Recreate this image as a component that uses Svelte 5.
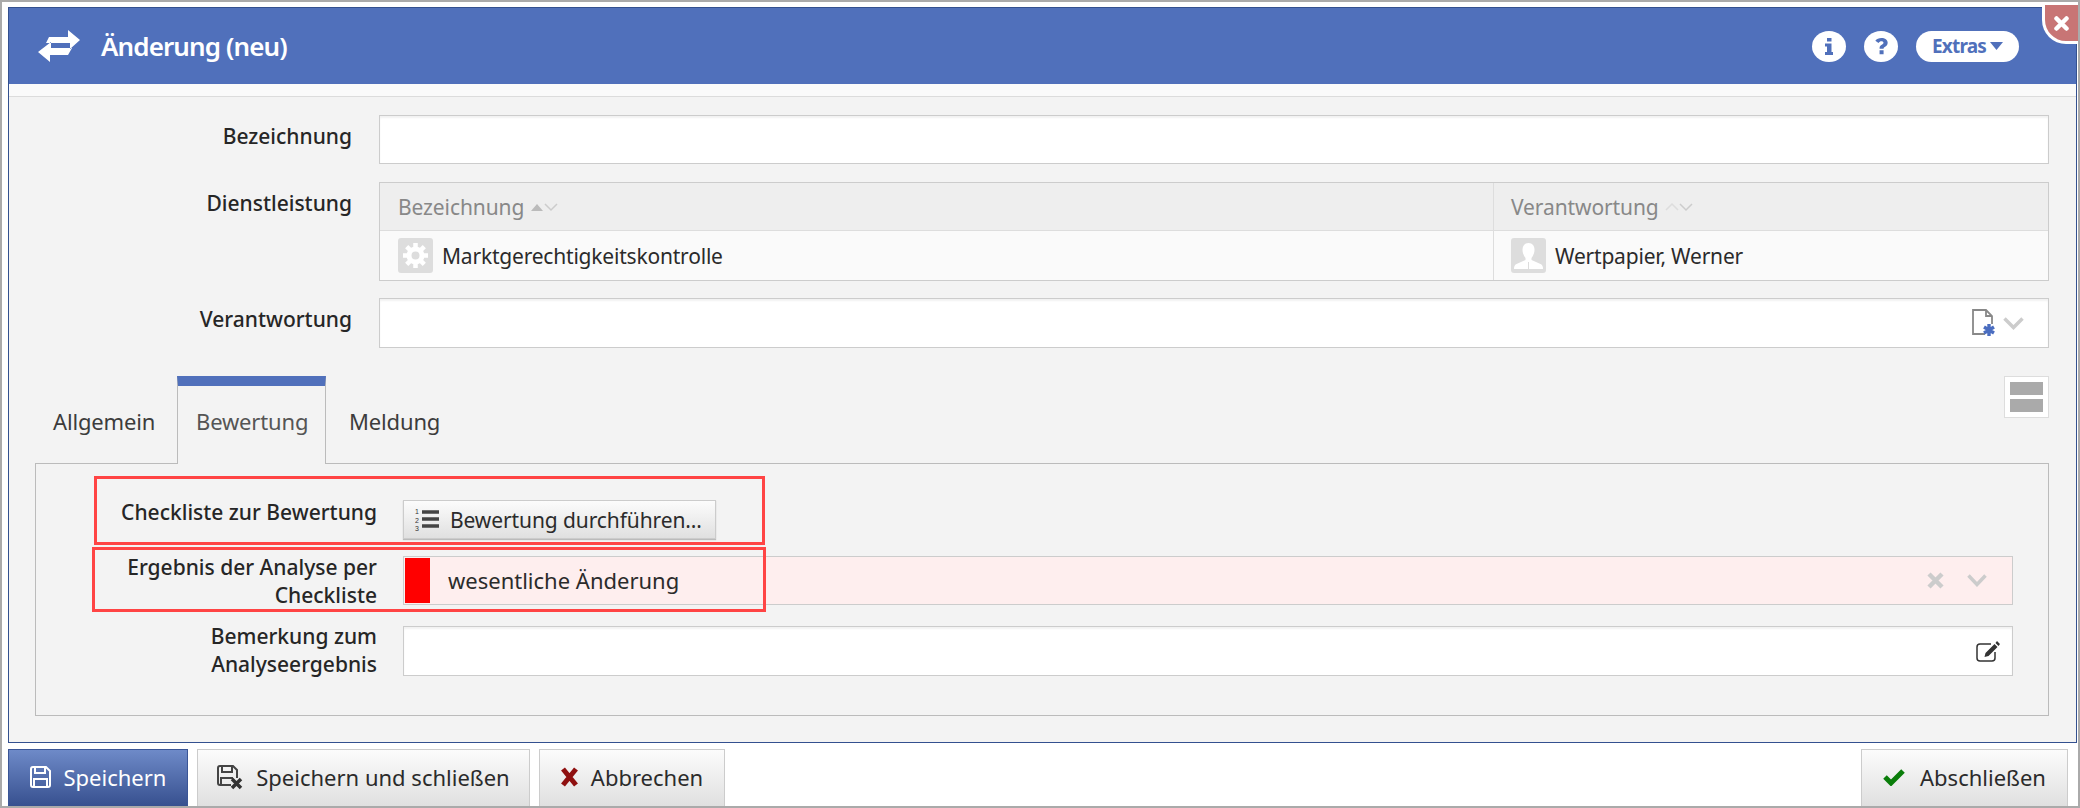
<style>
	:global(body) {
		margin: 0;
		background: #fff;
		color: #2b2b2b;
		font-family: 'Noto Sans', 'Open Sans', sans-serif;
		font-size: 21px;
	}

	.page {
		width: 2080px;
		height: 808px;
		box-sizing: border-box;
		border: 2px solid #aaa;
		padding: 5px 1px 0 6px;
		display: flex;
		flex-direction: column;
		overflow: hidden;
	}

	/* dialog */
	.dialog {
		height: 736px;
		flex: none;
		box-sizing: border-box;
		border: 1px solid #33508f;
		background: #f3f3f3;
		display: flex;
		flex-direction: column;
		position: relative;
	}

	.head {
		height: 76px;
		flex: none;
		background: #5070bb;
		color: #fff;
		display: flex;
		align-items: center;
		padding: 0 57px 0 27px;
	}

	.head h1 {
		margin: 0 0 0 19px;
		font-size: 26px;
		font-weight: 600;
		letter-spacing: -0.9px;
		flex: 1;
	}

	.round {
		width: 34px;
		height: 31px;
		border-radius: 50%;
		background: #fff;
		display: flex;
		align-items: center;
		justify-content: center;
		margin-right: 18px;
	}

	.extras {
		width: 103px;
		height: 31px;
		border-radius: 16px;
		background: #fff;
		color: #5070bb;
		font-weight: 700;
		font-size: 19px;
		letter-spacing: -0.8px;
		display: flex;
		align-items: center;
		justify-content: center;
		gap: 4px;
	}

	.close {
		position: absolute;
		right: -2px;
		top: -3px;
		width: 36px;
		height: 39px;
		box-sizing: border-box;
		background: #c87575;
		border-left: 3px solid #fff;
		border-bottom: 3px solid #fff;
		border-bottom-left-radius: 24px;
		display: flex;
		align-items: center;
		justify-content: center;
	}

	.strip {
		height: 12px;
		flex: none;
		background: #fafafa;
		border-bottom: 1px solid #dcdcdc;
	}

	.form {
		padding: 18px 27px 0 11px;
		display: grid;
		grid-template-columns: 332px 1fr;
		column-gap: 27px;
		row-gap: 18px;
	}

	.lbl {
		text-align: right;
		font-weight: 500;
		line-height: 28px;
		color: #262626;
	}

	.form .lbl {
		padding-top: 7px;
	}

	.input {
		height: 50px;
		box-sizing: border-box;
		border: 1px solid #ccc;
		background: #fff;
		box-shadow: inset 0 2px 2px #f2f2f2;
		display: flex;
		align-items: center;
		justify-content: flex-end;
	}

	.input.low {
		height: 49px;
	}

	.input.lookup {
		gap: 8px;
		padding-right: 24px;
	}

	/* table */
	.tbl {
		border: 1px solid #ccc;
		display: grid;
		grid-template-columns: 1113px 1fr;
		grid-template-rows: 48px 1fr;
		height: 99px;
		box-sizing: border-box;
		margin-bottom: -1px;
	}

	.th {
		background: #eee;
		border-bottom: 1px solid #ddd;
		color: #888;
		display: flex;
		align-items: center;
		padding-left: 18px;
		letter-spacing: -0.1px;
		gap: 6px;
	}

	.td {
		background: #fafafa;
		display: flex;
		align-items: center;
		padding-left: 18px;
		letter-spacing: -0.2px;
		gap: 9px;
	}

	.th + .th,
	.td + .td {
		border-left: 1px solid #ddd;
		padding-left: 17px;
	}

	.avatar {
		width: 35px;
		height: 35px;
		border-radius: 3px;
		background: #ddd;
		display: block;
	}

	/* tabs */
	.tabs {
		display: flex;
		align-items: flex-start;
		justify-content: space-between;
		margin: 28px 27px 0 26px;
		height: 87px;
		flex: none;
	}

	.tablist {
		display: flex;
		height: 87px;
	}

	.tab {
		box-sizing: border-box;
		padding: 30px 0 0 18px;
		color: #3c3c3c;
		letter-spacing: -0.15px;
		font-size: 22px;
		line-height: 30px;
	}

	.tab.first {
		width: 142px;
	}

	.tab.on {
		position: relative;
		width: 149px;
		height: 88px;
		padding: 20px 0 0 18px;
		background: #f3f3f3;
		border: 1px solid #bbb;
		border-top: 10px solid #5070bb;
		border-bottom: 0;
		color: #555;
		z-index: 1;
	}

	.tab.on + .tab {
		padding-left: 23px;
	}

	.toggle {
		width: 45px;
		height: 42px;
		box-sizing: border-box;
		border: 1px solid #ddd;
		background: #fff;
		padding: 5px;
		display: flex;
		flex-direction: column;
		justify-content: space-between;
	}

	.toggle span {
		height: 13px;
		background: #aaa;
	}

	.panel {
		position: relative;
		margin: 0 27px 0 26px;
		height: 253px;
		box-sizing: border-box;
		border: 1px solid #bbb;
		padding: 36px 35px 0 0;
		display: grid;
		grid-template-columns: 341px 1fr;
		grid-template-rows: 39px 49px 54px;
		column-gap: 26px;
		row-gap: 17px;
	}

	.panel .lbl {
		padding-left: 80px;
	}

	.lbl.one {
		margin-top: -2px;
	}

	.lbl.two {
		margin-top: -3px;
	}

	.lbl.three {
		margin-top: 0;
	}

	.btn {
		display: inline-flex;
		align-items: center;
		box-sizing: border-box;
		border: 1px solid #ccc;
		background: linear-gradient(#fcfcfc, #e0e0e0);
		color: #2b2b2b;
		white-space: nowrap;
	}

	.run {
		width: 313px;
		height: 39px;
		padding-left: 11px;
		gap: 11px;
		letter-spacing: -0.1px;
		box-shadow: 0 1px 1px #bbb;
	}

	.digit {
		font-family: 'Liberation Sans', sans-serif;
		font-size: 7px;
		letter-spacing: 0;
		fill: #333;
	}

	.result {
		background: #feeeee;
		height: 49px;
		box-shadow: none;
		justify-content: flex-start;
		padding: 1px 0 1px 1px;
		gap: 18px;
	}

	.swatch {
		width: 25px;
		align-self: stretch;
		background: #f00;
	}

	.result b {
		font-weight: 400;
		font-size: 22px;
		flex: 1;
		margin-top: -2px;
	}

	.clear {
		margin-right: 5px;
	}

	.open {
		margin-right: 25px;
	}

	.note {
		align-self: end;
		padding-right: 11px;
	}

	/* footer */
	.foot {
		display: flex;
		gap: 9px;
		padding-top: 6px;
		height: 57px;
		font-size: 22px;
		flex: none;
	}

	.foot .btn {
		height: 57px;
		border-bottom: 0;
		justify-content: center;
		gap: 13px;
		padding-bottom: 2px;
	}

	.primary {
		width: 180px;
		background: linear-gradient(#6e8ac8, #37508f);
		border-color: #3a5596 !important;
		color: #fff !important;
	}

	.save {
		width: 333px;
	}

	.abort {
		width: 186px;
	}

	.done {
		width: 207px;
		margin-left: auto;
		margin-right: 9px;
		gap: 15px !important;
	}

	.mark {
		position: absolute;
		box-sizing: border-box;
		border: 3px solid #f44;
		pointer-events: none;
		z-index: 2;
	}

	.mark.a {
		left: 58px;
		top: 12px;
		width: 671px;
		height: 69px;
	}

	.mark.b {
		left: 56px;
		top: 83px;
		width: 674px;
		height: 65px;
	}
</style>

<script>
	const head = [
		{ name: 'Bezeichnung', up: '#bbb' },
		{ name: 'Verantwortung', up: null }
	];
</script>

<div class="page">
	<div class="dialog">
		<header class="head">
			<svg width="46" height="34" viewBox="0 0 46 34">
				<path fill="#fff" d="M13 8h19V1l12 10-10 9v-6H10zM36 19H15v-6L2 23l12 10v-7h18z" />
			</svg>
			<h1>Änderung (neu)</h1>
			<span class="round">
				<svg width="8" height="17" viewBox="0 0 8 17"><path fill="#5070bb" d="M2 0h4.500v3.500H2zM0 5.500h6.500V14H8v3H0v-3h2V8.500H0z" /></svg>
			</span>
			<span class="round">
				<svg width="13" height="17" viewBox="0 0 16 22"><path fill="#5070bb" d="M8 0c4.500 0 8 2.400 8 6.200 0 3.100-2 4.300-3.700 5.300-1 .6-1.600 1-1.600 2v.5H5.500v-1c0-2.400 1.300-3.400 2.900-4.300 1.300-.7 2.200-1.200 2.200-2.400 0-1.300-1.200-2-2.700-2-1.500 0-2.700.8-3.800 2.200L0 3.500C1.800 1.200 4.400 0 8 0zM5.500 16h5.200v5H5.500z" /></svg>
			</span>
			<span class="extras">
				Extras
				<svg width="13" height="8" viewBox="0 0 13 8"><path fill="#5070bb" d="M0 0h13L6.500 8z" /></svg>
			</span>
		</header>
		<div class="close">
			<svg width="15" height="15" viewBox="0 0 15 15"><path stroke="#fff" stroke-width="4.500" stroke-linecap="round" d="M2.500 2.500l10 10M12.500 2.500l-10 10" /></svg>
		</div>
		<div class="strip"></div>

		<div class="form">
			<div class="lbl">Bezeichnung</div>
			<div class="input low"></div>

			<div class="lbl">Dienstleistung</div>
			<div class="tbl">
				{#each head as col}
					<div class="th">
						{col.name}
						<svg width="28" height="10" viewBox="0 0 28 10">
							{#if col.up}
								<path fill={col.up} d="M1 9l6-7 6 7z" />
							{:else}
								<path fill="none" stroke="#ddd" stroke-width="1.500" d="M1 8l6-6 6 6" />
							{/if}
							<path fill="none" stroke="#ccc" stroke-width="1.500" d="M15 2l6 6 6-6" />
						</svg>
					</div>
				{/each}
				<div class="td">
					<svg class="avatar" viewBox="0 0 35 35">
						<g fill="none" stroke="#fff">
							<circle cx="17.500" cy="17.500" r="6.500" stroke-width="5" />
							<path stroke-width="4.500" d="M17.500 5v5M17.500 25v5M5 17.500h5M25 17.500h5M8.700 8.700l3.500 3.500M22.800 22.800l3.500 3.500M26.300 8.700l-3.500 3.500M12.200 22.800l-3.500 3.500" />
						</g>
					</svg>
					Marktgerechtigkeitskontrolle
				</div>
				<div class="td">
					<svg class="avatar" viewBox="0 0 35 35">
						<path fill="#fff" d="M17.500 5c4 0 6 3 6 7 0 3-1.500 6-3 8v2l9 4c2 1 2.500 2.500 2.500 5H3c0-2.500.5-4 2.500-5l9-4v-2c-1.500-2-3-5-3-8 0-4 2-7 6-7z" />
						<path stroke="#ddd" d="M17.500 24v7" />
					</svg>
					Wertpapier, Werner
				</div>
			</div>

			<div class="lbl">Verantwortung</div>
			<div class="input lookup">
				<svg width="24" height="28" viewBox="0 0 24 28">
					<path fill="none" stroke="#888" stroke-width="1.800" d="M14 25H2V1h13l6 6v8M15 1v6h6" />
					<path stroke="#4a6dc0" stroke-width="3.400" d="M18 15v12M13 18l10 6M23 18l-10 6" />
				</svg>
				<svg width="21" height="13" viewBox="0 0 21 13"><path fill="none" stroke="#ccc" stroke-width="3.500" d="M1.500 1.500l9 9 9-9" /></svg>
			</div>
		</div>

		<div class="tabs">
			<div class="tablist">
				<div class="tab first">Allgemein</div>
				<div class="tab on">Bewertung</div>
				<div class="tab">Meldung</div>
			</div>
			<div class="toggle"><span></span><span></span></div>
		</div>

		<div class="panel">
			<div class="mark a"></div>
			<div class="mark b"></div>

			<div class="lbl one">Checkliste zur Bewertung</div>
			<div>
				<span class="btn run">
					<svg width="24" height="27" viewBox="0 0 24 27">
						<text class="digit" x="0" y="8">1</text>
						<text class="digit" x="0" y="16.500">2</text>
						<text class="digit" x="0" y="25">3</text>
						<path stroke="#444" stroke-width="3.500" d="M7 6h17M7 13h17M7 20h17" />
					</svg>
					Bewertung durchführen…
				</span>
			</div>

			<div class="lbl two">Ergebnis der Analyse per Checkliste</div>
			<div class="input result">
				<span class="swatch"></span>
				<b>wesentliche Änderung</b>
				<svg class="clear" width="17" height="17" viewBox="0 0 17 17"><path stroke="#ccc" stroke-width="4.500" d="M2 2l13 13M15 2L2 15" /></svg>
				<svg class="open" width="20" height="13" viewBox="0 0 20 13"><path fill="none" stroke="#ccc" stroke-width="3.500" d="M1.500 1.500l8.500 9 8.500-9" /></svg>
			</div>

			<div class="lbl three">Bemerkung zum Analyseergebnis</div>
			<div class="input note">
				<svg width="25" height="21" viewBox="0 0 25 21">
					<path fill="none" stroke="#333" stroke-width="1.500" d="M19 11v6c0 2-1 3-3 3H4c-2 0-3-1-3-3V6c0-2 1-3 3-3h11" />
					<path fill="#333" d="M21 0l3 3-1.500 2-3-3zM18.500 3l3 3-9 9-4 1 1-4z" />
				</svg>
			</div>
		</div>
	</div>

	<div class="foot">
		<span class="btn primary">
			<svg width="21" height="22" viewBox="0 0 21 22"><path fill="none" stroke="#fff" stroke-width="2" d="M3 1h13l4 4v14a2 2 0 0 1-2 2H3a2 2 0 0 1-2-2V3a2 2 0 0 1 2-2zM5 1v6h10V1M4 21v-8h13v8" /></svg>
			Speichern
		</span>
		<span class="btn save">
			<svg width="26" height="25" viewBox="0 0 26 25">
				<path fill="none" stroke="#444" stroke-width="2" d="M14 20H3a2 2 0 0 1-2-2V3a2 2 0 0 1 2-2h13l4 4v8M5 1v6h10V1M4 20v-7h12" />
				<path stroke="#333" stroke-width="3.500" d="M15 14l9 9M24 14l-9 9" />
			</svg>
			Speichern und schließen
		</span>
		<span class="btn abort">
			<svg width="17" height="20" viewBox="0 0 17 20"><path stroke="#8f1010" stroke-width="5" d="M2 2l13 16M15 2L2 18" /></svg>
			Abbrechen
		</span>
		<span class="btn done">
			<svg width="22" height="17" viewBox="0 0 22 17"><path fill="none" stroke="#0a7d0a" stroke-width="5" d="M2 8l6 6L20 2" /></svg>
			Abschließen
		</span>
	</div>
</div>
